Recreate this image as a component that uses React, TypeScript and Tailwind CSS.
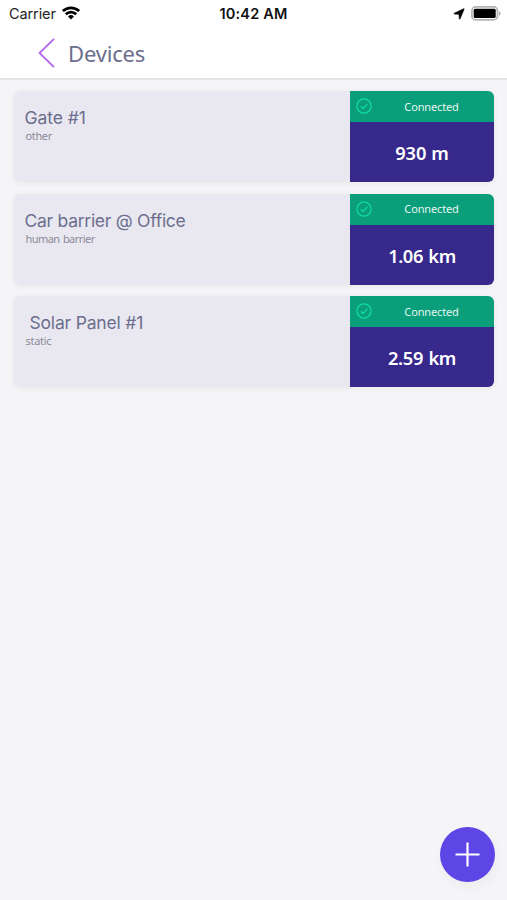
import React from 'react';

interface Device {
    id: number;
    name: string;
    type: string;
    distance: string;
    nameClass: string;
    typeClass: string;
    distanceClass: string;
}

const devices: Device[] = [
    { id: 1, name: 'Gate #1', type: 'other', distance: '930 m', nameClass: 'tracking-[-0.05px]', typeClass: 'tracking-[-0.35px]', distanceClass: '' },
    { id: 2, name: 'Car barrier @ Office', type: 'human barrier', distance: '1.06 km', nameClass: 'tracking-[-0.27px]', typeClass: 'tracking-[-0.55px] [word-spacing:1px]', distanceClass: 'tracking-[-0.4px] [word-spacing:1px]' },
    { id: 3, name: 'Solar Panel #1', type: 'static', distance: '2.59 km', nameClass: 'pl-[5px] tracking-[-0.18px]', typeClass: 'tracking-[-0.3px]', distanceClass: 'tracking-[-0.35px] [word-spacing:1px]' },
];

const StatusBar: React.FC = () => (
    <div className="grid grid-cols-3 items-center h-7 pl-[9px] pr-[6px] font-['Inter',sans-serif] text-[14.5px] leading-7 text-black">
        <div className="flex items-center">
            <span className="w-[47px] whitespace-nowrap tracking-[-0.1px] text-[#222]">Carrier</span>
            <svg className="ml-[6px] w-[18px] h-[14px] -mt-[2px]" viewBox="0 0 18 14" fill="none" stroke="currentColor" strokeWidth="2.7">
                <path d="M0.9 5.1a11.6 11.6 0 0 1 16.2 0" />
                <path d="M3.8 8.2a7.4 7.4 0 0 1 10.4 0" />
                <path d="M9 13.6 6 10.5a4.3 4.3 0 0 1 6 0z" fill="currentColor" stroke="none" />
            </svg>
        </div>
        <span className="-ml-[3px] text-center font-semibold whitespace-nowrap tracking-[0.2px] text-[#111]">10:42 AM</span>
        <div className="flex items-center justify-end -mt-px">
            <svg className="w-3 h-3 mr-[6px]" viewBox="0 0 12 12" fill="currentColor" stroke="currentColor" strokeWidth="0.6">
                <path d="M11.2.9 7 11Q6.500 11.500 6.300 10.800L6 6.300 1.200 6Q.6 5.800 1.200 5.300L10.600.8Q11.300.5 11.200.9z" />
            </svg>
            <svg className="w-[30px] h-[15px]" viewBox="0 0 30 15">
                <rect x="0.9" y="0.9" width="25.6" height="13" rx="4" fill="#fff" stroke="#b4b4b4" strokeWidth="1.8" />
                <rect x="2.7" y="2.7" width="22" height="9.4" rx="1.5" fill="#000" />
                <path d="M28 5.2v4.6c.9-.4 1.6-1.2 1.6-2.3S28.9 5.6 28 5.2z" fill="#aaa" />
            </svg>
        </div>
    </div>
);

const DeviceCard: React.FC<{ device: Device }> = ({ device }) => (
    <div className="flex h-[91px] rounded-md overflow-hidden bg-[#e9e8f1] shadow-[0_1px_7px_rgba(0,0,0,0.06)]">
        <div className="flex-1 pl-[10.5px] pt-[15px]">
            <h2 className={`font-['Inter',sans-serif] text-[17.5px] leading-6 text-[#6b6e8c] whitespace-nowrap ${device.nameClass}`}>
                {device.name}
            </h2>
            <p className={`pl-px -mt-px font-['Noto_Sans',sans-serif] text-[11px] leading-[14px] text-[#8b8b98] ${device.typeClass}`}>
                {device.type}
            </p>
        </div>
        <div className="flex flex-col w-[144px] font-['Noto_Sans',sans-serif]">
            <div className="flex items-center h-[31px] pl-[6px] bg-[#0a9e7a]">
                <svg className="w-4 h-4 -mt-px" viewBox="0 0 16 16" fill="none" stroke="#10dda0" strokeWidth="1.3">
                    <circle cx="8" cy="8" r="7.1" />
                    <path d="m4.8 8.3 2.2 2.2 4.3-4.600" />
                </svg>
                <span className="flex-1 pl-[6px] pr-[9px] text-center text-[11px] leading-4 tracking-[-0.15px] text-[#e4f6f0]">Connected</span>
            </div>
            <div className="flex-1 flex items-center justify-center pt-[2px] bg-[#37288b]">
                <span className={`text-[18.3px] leading-7 font-semibold text-white ${device.distanceClass}`}>{device.distance}</span>
            </div>
        </div>
    </div>
);

const App: React.FC = () => {
    return (
        <div className="relative w-full h-screen overflow-hidden flex flex-col bg-[#f5f5f8]">
            <header className="h-20 shrink-0 bg-white border-b-2 border-[#e5e5e7]">
                <StatusBar />
                <div className="flex items-center h-[50px] pl-[38px]">
                    <svg className="w-[17px] h-[30px]" viewBox="0 0 17 30" fill="none" stroke="#b264ee" strokeWidth="1.8">
                        <path d="M16 .8 1.5 15 16 29.2" />
                    </svg>
                    <h1 className="ml-[13px] font-['Noto_Sans',sans-serif] text-[22px] tracking-[-0.18px] text-[#6b6e8c]">Devices</h1>
                </div>
            </header>

            <main className="flex flex-col gap-[11.5px] pt-[11px] pl-[14px] pr-[13px]">
                {devices.map((device) => (
                    <DeviceCard key={device.id} device={device} />
                ))}
            </main>

            <button
                aria-label="Add device"
                className="absolute right-[12px] bottom-[18px] w-[55px] h-[55px] rounded-full flex items-center justify-center bg-[#5d45e6] shadow-[2px_5px_12px_rgba(0,0,0,0.04)]"
            >
                <svg className="w-[25px] h-[25px]" viewBox="0 0 25 25" fill="none" stroke="#fff" strokeWidth="2.2">
                    <path d="M12.5.5v24M.5 12.5h24" />
                </svg>
            </button>
        </div>
    );
};

export default App;
